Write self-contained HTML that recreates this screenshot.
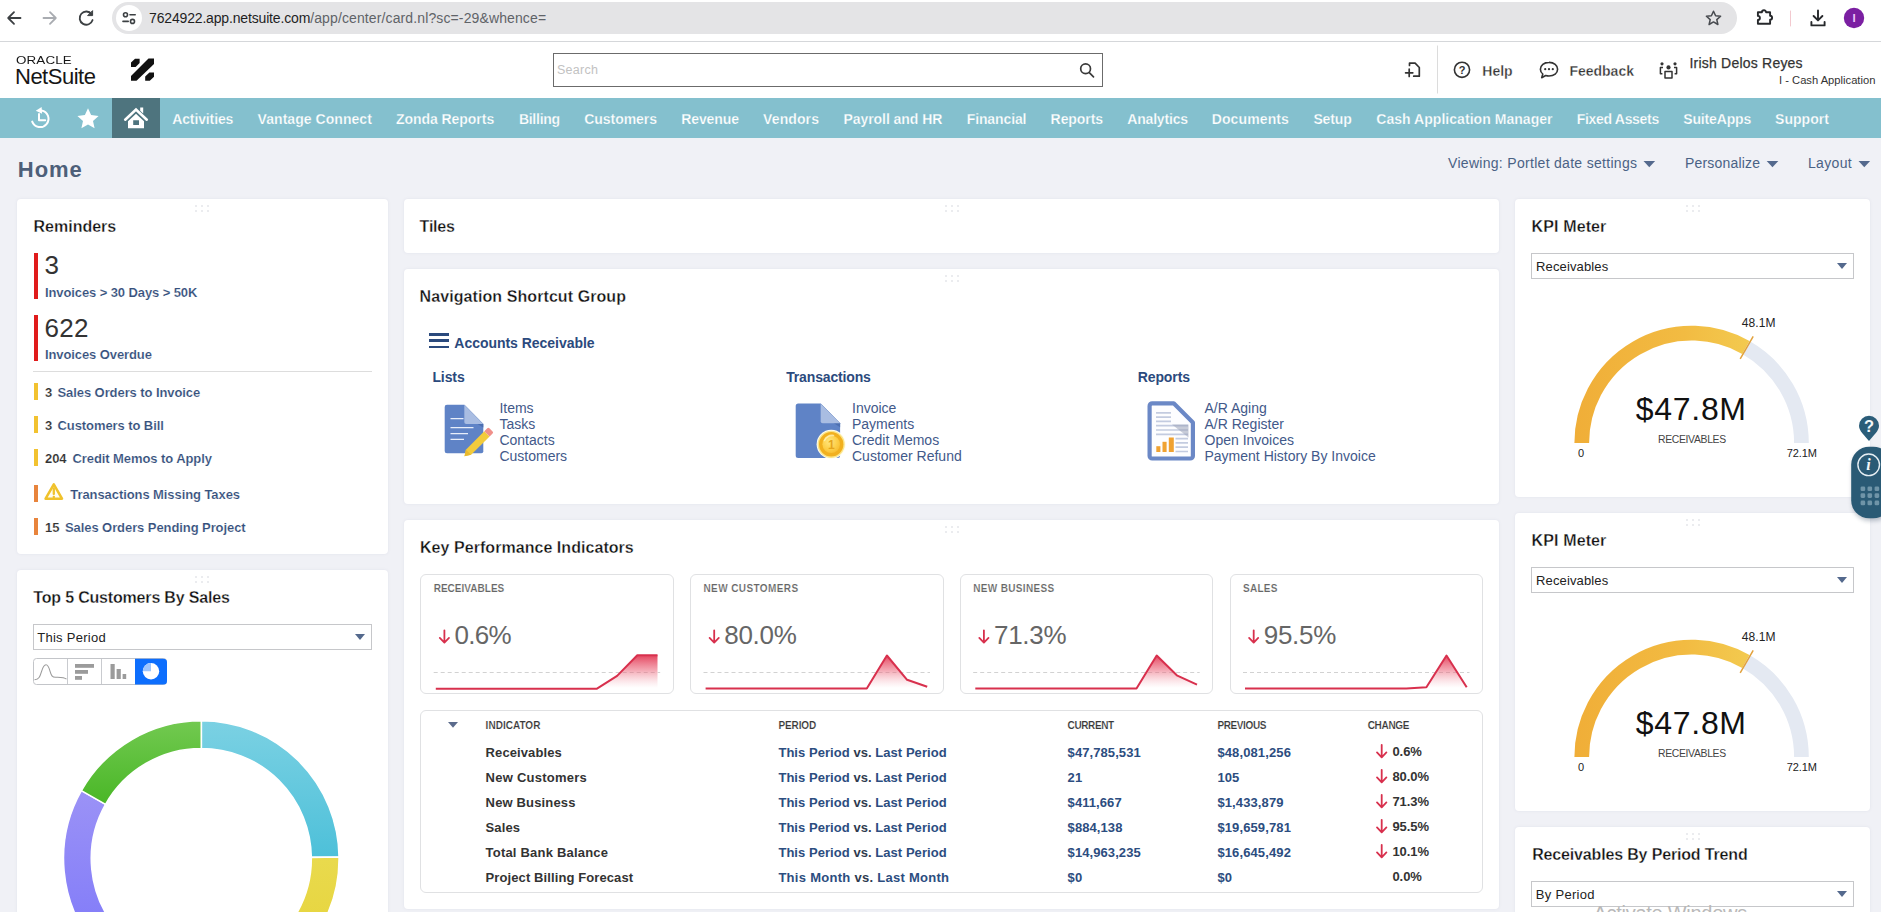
<!DOCTYPE html>
<html lang="en">
<head>
<meta charset="utf-8">
<title>Home - NetSuite</title>
<style>
*{box-sizing:border-box;margin:0;padding:0}
html,body{width:1881px;height:912px;overflow:hidden;background:#f0f1f6}
body{position:relative;font-family:"Liberation Sans","DejaVu Sans",sans-serif;color:#222;-webkit-font-smoothing:antialiased}
.abs{position:absolute}
.t{position:absolute;white-space:nowrap;line-height:1}
svg{position:absolute;overflow:visible}
/* browser chrome */
#chrome{position:absolute;left:0;top:0;width:1881px;height:42px;background:#fff;border-bottom:1px solid #d5d7da}
#pill{position:absolute;left:112px;top:2px;width:1625px;height:32px;border-radius:16px;background:#e4e4e6}
#pillic{position:absolute;left:116px;top:5px;width:26px;height:26px;border-radius:13px;background:#fff}
/* header */
#hdr{position:absolute;left:0;top:42px;width:1881px;height:56px;background:#fff}
#search{position:absolute;left:553px;top:53px;width:550px;height:34px;border:1px solid #6b6b6b;border-radius:0;background:transparent}
/* nav */
#nav{position:absolute;left:0;top:98px;width:1881px;height:40px;background:#84c0ce}
#navhome{position:absolute;left:112px;top:98px;width:48px;height:40px;background:#4e747e}
.nv{position:absolute;top:110px;color:#fff;font-weight:bold;-webkit-text-stroke:0.25px #84c0ce;font-size:14px;white-space:nowrap;line-height:18px}
/* portlets */
.p{position:absolute;background:#fff;border-radius:4px;box-shadow:0 0 3px rgba(120,130,160,.13)}
.pt{position:absolute;white-space:nowrap;font-weight:bold;font-size:16.5px;color:#111;line-height:20px}
.dots{position:absolute;width:14px;height:7px}
.dots i{position:absolute;width:2px;height:2px;background:#ebecef}
.sel{position:absolute;height:25px;border:1px solid #c6c7ca;background:#fff;font-size:13.5px;color:#222;line-height:23px;padding-left:4px;white-space:nowrap}
.sel:after{content:"";position:absolute;right:6.500px;top:9px;border-left:5.800px solid transparent;border-right:5.800px solid transparent;border-top:6.400px solid #54698d}
.lnk{color:#35507c}
</style>
</head>
<body>
<!-- ================= BROWSER CHROME ================= -->
<div id="chrome"></div>
<div id="pill"></div>
<div id="pillic"></div>
<svg style="left:0;top:0" width="1881" height="42" viewBox="0 0 1881 42" fill="none" stroke-linecap="round" stroke-linejoin="round">
<!-- back -->
<path d="M20.5 18H8.5M14 12.2L8.2 18l5.8 5.8" stroke="#3c4043" stroke-width="1.8"/>
<!-- forward -->
<path d="M43.5 18h12M50 12.2l5.8 5.8-5.8 5.8" stroke="#a9acb1" stroke-width="1.8"/>
<!-- reload -->
<path d="M91.6 14.2A6.6 6.6 0 1 0 92.6 20" stroke="#3c4043" stroke-width="1.8"/>
<path d="M92.6 11v4.6H88z" fill="#3c4043" stroke="#3c4043" stroke-width="1"/>
<!-- tune icon -->
<g stroke="#3c4043" stroke-width="1.6"><circle cx="125.5" cy="14.8" r="2"/><path d="M130 14.8h5.2"/><circle cx="132.5" cy="21.4" r="2"/><path d="M123 21.4h5.2"/></g>
<!-- star -->
<path d="M1713.5 11.2l2.1 4.6 5 .5-3.8 3.3 1.1 4.9-4.4-2.6-4.4 2.6 1.1-4.9-3.8-3.3 5-.5z" stroke="#474a4f" stroke-width="1.5"/>
<!-- extension puzzle -->
<path d="M1757.900 12.300h4a2.100 2.100 0 0 1 4.200 0h4v3.400a2 2 0 0 1 0 4v4h-12.200v-3.800a2 2 0 0 0 0-4z" stroke="#26282b" stroke-width="1.900"/>
<!-- divider -->
<path d="M1790.5 11v15" stroke="#f3c9cf" stroke-width="1"/>
<!-- download -->
<path d="M1818 10.5v9.6M1813.6 16l4.4 4.4 4.4-4.4M1811.4 22v3.4h13.2V22" stroke="#26282b" stroke-width="1.9"/>
<circle cx="1854" cy="18" r="10.2" fill="#7b1fa2" stroke="none"/>
</svg>
<div class="t" style="left:1850.5px;top:12px;width:7px;text-align:center;font-size:11.5px;font-weight:bold;color:#efc6fa;line-height:13px">I</div>
<div class="t" style="left:149px;top:10px;font-size:14px;color:#1f1f1f;line-height:17px"><span style="letter-spacing:-0.16px">7624922.app.netsuite.com</span><span style="color:#5f6368;letter-spacing:0.12px">/app/center/card.nl?sc=-29&amp;whence=</span></div>

<!-- ================= HEADER ================= -->
<div id="hdr"></div>
<div class="t" style="left:16px;top:56px;font-size:10.4px;line-height:10px;color:#161616;transform-origin:0 0;transform:scaleX(1.29);letter-spacing:0.1px">ORACLE</div>
<div class="t" style="left:15px;top:66px;font-size:22px;line-height:22px;color:#161616;letter-spacing:-0.5px">NetSuite</div>
<svg style="left:0;top:42px" width="1881" height="56" viewBox="0 42 1881 56">
<polygon points="131,76 148.5,58.4 154,58.4 154,64 136.5,80.8 131,80.8" fill="#111"/>
<polygon points="131,62.6 135,58.8 139.6,58.8 139.6,63 135.6,67 131,67" fill="#111"/>
<polygon points="145.2,76.4 149.4,72.4 154,72.4 154,76.8 149.8,80.8 145.2,80.8" fill="#111"/>
<!-- magnifier -->
<g fill="none" stroke="#3a3a3a" stroke-width="1.7" stroke-linecap="round"><circle cx="1085.6" cy="68.8" r="4.9"/><path d="M1089.3 72.6l4.2 4.2"/></g>
<!-- new doc icon -->
<g fill="none" stroke="#333" stroke-width="1.7" stroke-linejoin="round" stroke-linecap="round"><path d="M1409.5 65.5v-2.3h5.6l4.2 4.3v8.7h-5.6"/><path d="M1405.6 72.8h7.2M1409.2 69.2v7.2"/></g>
<path d="M1437.5 45.5v48" stroke="#dcdcdc" stroke-width="1"/>
<!-- help -->
<circle cx="1462" cy="69.8" r="7.6" fill="none" stroke="#333" stroke-width="1.6"/>
<!-- feedback bubble -->
<path d="M1549 62.4c5 0 8.6 3 8.6 6.8s-3.6 6.8-8.6 6.800c-1.200 0-2.300-.2-3.300-.5l-4 2.200 1.100-3.700c-1.500-1.200-2.400-2.900-2.400-4.800 0-3.800 3.600-6.800 8.600-6.800z" fill="none" stroke="#333" stroke-width="1.6" stroke-linejoin="round"/>
<g fill="#333"><circle cx="1545.2" cy="69.200" r="1.100"/><circle cx="1549" cy="69.200" r="1.100"/><circle cx="1552.8" cy="69.200" r="1.100"/></g>
<!-- roles icon -->
<g fill="none" stroke="#333" stroke-width="1.5" stroke-linejoin="round"><rect x="1665" y="71.6" width="7" height="6.400"/><path d="M1663 67.600h-2.600v6.200h2M1674 67.600h2.600v6.200h-2"/></g>
<g fill="#333"><circle cx="1668.500" cy="67.400" r="2.100"/><circle cx="1662" cy="63.800" r="1.600"/><circle cx="1675" cy="63.800" r="1.600"/></g>
</svg>
<div id="search"></div>
<div class="t" style="left:557px;top:63px;font-size:12.5px;line-height:15px;color:#c2c2c2;letter-spacing:0.25px">Search</div>
<div class="t" style="left:1458.2px;top:63.5px;font-size:11px;font-weight:bold;line-height:13px;color:#333;width:8px;text-align:center">?</div>
<div class="t" style="left:1482.3px;top:63px;font-size:14px;font-weight:bold;-webkit-text-stroke:0.3px #fff;line-height:17px;color:#333">Help</div>
<div class="t" style="left:1569.4px;top:63px;font-size:14px;font-weight:bold;-webkit-text-stroke:0.3px #fff;line-height:17px;color:#333">Feedback</div>
<div class="t" style="left:1689.4px;top:55px;font-size:14px;line-height:17px;color:#333;letter-spacing:0.22px;-webkit-text-stroke:0.25px #333">Irish Delos Reyes</div>
<div class="t" style="left:1779px;top:73.5px;font-size:11.2px;line-height:13px;color:#333">I - Cash Application</div>

<!-- ================= NAV ================= -->
<div id="nav"></div>
<div id="navhome"></div>
<div class="nv" style="left:172.2px;letter-spacing:-0.12px">Activities</div>
<div class="nv" style="left:257.6px;letter-spacing:0.05px">Vantage Connect</div>
<div class="nv" style="left:395.9px;letter-spacing:-0.04px">Zonda Reports</div>
<div class="nv" style="left:518.9px;letter-spacing:-0.26px">Billing</div>
<div class="nv" style="left:584.2px;letter-spacing:-0.04px">Customers</div>
<div class="nv" style="left:681.2px;letter-spacing:-0.10px">Revenue</div>
<div class="nv" style="left:763.1px;letter-spacing:0.10px">Vendors</div>
<div class="nv" style="left:843.5px;letter-spacing:-0.06px">Payroll and HR</div>
<div class="nv" style="left:966.7px;letter-spacing:-0.11px">Financial</div>
<div class="nv" style="left:1050.6px;letter-spacing:-0.07px">Reports</div>
<div class="nv" style="left:1127.2px;letter-spacing:-0.17px">Analytics</div>
<div class="nv" style="left:1211.7px;letter-spacing:0.12px">Documents</div>
<div class="nv" style="left:1313.4px;letter-spacing:-0.12px">Setup</div>
<div class="nv" style="left:1376.3px;letter-spacing:0.04px">Cash Application Manager</div>
<div class="nv" style="left:1576.7px;letter-spacing:-0.30px">Fixed Assets</div>
<div class="nv" style="left:1683.2px;letter-spacing:-0.14px">SuiteApps</div>
<div class="nv" style="left:1775.0px;letter-spacing:0.04px">Support</div>
<svg style="left:0;top:98px" width="200" height="40" viewBox="0 98 200 40">
<!-- recent -->
<g fill="none" stroke="#fff" stroke-width="2" stroke-linecap="round" stroke-linejoin="round"><path d="M41.500 110.400A8.400 8.400 0 1 1 32.200 121.600"/><path d="M39 114v6.300h6.200"/></g>
<path d="M41.600 106.900l.5 6.800-6.300-2.900z" fill="#fff"/>
<!-- star -->
<path d="M88 108.200l3.100 6.900 7.500 .8-5.600 5 1.600 7.400-6.600-3.800-6.600 3.800 1.600-7.400-5.600-5 7.500-.8z" fill="#fff"/>
<!-- home -->
<path d="M125.200 119.700L136 109.500l10.800 10.200" fill="none" stroke="#fff" stroke-width="2.600" stroke-linecap="round" stroke-linejoin="miter"/>
<path d="M140.200 107.600h3v6l-3-2.900z" fill="#fff"/>
<path d="M128 121.300l8-7.600 8 7.600v7h-16z M133.200 120.200v4.700h5.800v-4.700z" fill="#fff" fill-rule="evenodd"/>
</svg>

<!-- ================= TITLE ROW ================= -->
<div class="t" style="left:17.8px;top:158px;font-size:22px;font-weight:bold;line-height:24px;color:#4d5f79;letter-spacing:0.95px">Home</div>
<div class="t lnk" style="left:1448px;top:155px;font-size:14px;line-height:17px;letter-spacing:0.3px;color:#4a6285">Viewing: Portlet date settings</div>
<div class="t lnk" style="left:1685px;top:155px;font-size:14px;line-height:17px;letter-spacing:0.18px;color:#4a6285">Personalize</div>
<div class="t lnk" style="left:1808px;top:155px;font-size:14px;line-height:17px;letter-spacing:0.32px;color:#4a6285">Layout</div>
<svg style="left:1600px;top:150px" width="281" height="30" viewBox="1600 150 281 30" fill="#54698d">
<path d="M1643.500 161h11.600l-5.800 6.200z"/><path d="M1766.700 161h11.600l-5.800 6.200z"/><path d="M1858.500 161h11.600l-5.800 6.200z"/>
</svg>

<!-- ================= PORTLETS ================= -->
<div class="p" style="left:17px;top:199px;width:371px;height:355px"></div>
<div class="p" style="left:17px;top:570px;width:371px;height:360px"></div>
<div class="p" style="left:404px;top:199px;width:1095px;height:54px"></div>
<div class="p" style="left:404px;top:269px;width:1095px;height:235px"></div>
<div class="p" style="left:404px;top:520px;width:1095px;height:389px"></div>
<div class="p" style="left:1515px;top:199px;width:355px;height:298px"></div>
<div class="p" style="left:1515px;top:513px;width:355px;height:298px"></div>
<div class="p" style="left:1515px;top:827px;width:355px;height:120px"></div>
<!-- reminders -->
<div class="dots" style="left:195px;top:205px"><i style="left:0px;top:0px"></i><i style="left:6px;top:0px"></i><i style="left:12px;top:0px"></i><i style="left:0px;top:5px"></i><i style="left:6px;top:5px"></i><i style="left:12px;top:5px"></i></div>
<div class="t" style="left:33.5px;top:219px;font-size:16px;color:#111;font-weight:bold;-webkit-text-stroke:0.3px #fff">Reminders</div>
<div class="abs" style="left:34px;top:253px;width:4px;height:46px;background:#e01b1b"></div>
<div class="t" style="left:44.5px;top:252px;font-size:26px;color:#333;letter-spacing:0.3px">3</div>
<div class="t" style="left:45px;top:286px;font-size:13px;color:#35507c;font-weight:bold;-webkit-text-stroke:0.15px #fff;letter-spacing:-0.1px">Invoices &gt; 30 Days &gt; 50K</div>
<div class="abs" style="left:34px;top:315px;width:4px;height:46px;background:#e01b1b"></div>
<div class="t" style="left:44.5px;top:315px;font-size:26px;color:#333;letter-spacing:0.3px">622</div>
<div class="t" style="left:45px;top:348px;font-size:13px;color:#35507c;font-weight:bold;-webkit-text-stroke:0.15px #fff;letter-spacing:-0.1px">Invoices Overdue</div>
<div class="abs" style="left:33px;top:371px;width:339px;height:1px;background:#dddddd"></div>
<div class="abs" style="left:34px;top:383px;width:4px;height:17px;background:#f2c230"></div>
<div class="t" style="left:45px;top:386px;font-size:13px;color:#333;font-weight:bold;-webkit-text-stroke:0.15px #fff;letter-spacing:-0.1px">3</div>
<div class="t" style="left:57.5px;top:386px;font-size:13px;color:#35507c;font-weight:bold;-webkit-text-stroke:0.15px #fff;letter-spacing:-0.08px">Sales Orders to Invoice</div>
<div class="abs" style="left:34px;top:416px;width:4px;height:17px;background:#f2c230"></div>
<div class="t" style="left:45px;top:419px;font-size:13px;color:#333;font-weight:bold;-webkit-text-stroke:0.15px #fff;letter-spacing:-0.1px">3</div>
<div class="t" style="left:57.5px;top:419px;font-size:13px;color:#35507c;font-weight:bold;-webkit-text-stroke:0.15px #fff;letter-spacing:-0.08px">Customers to Bill</div>
<div class="abs" style="left:34px;top:449px;width:4px;height:17px;background:#f2c230"></div>
<div class="t" style="left:45px;top:452px;font-size:13px;color:#333;font-weight:bold;-webkit-text-stroke:0.15px #fff;letter-spacing:-0.1px">204</div>
<div class="t" style="left:72.5px;top:452px;font-size:13px;color:#35507c;font-weight:bold;-webkit-text-stroke:0.15px #fff;letter-spacing:-0.08px">Credit Memos to Apply</div>
<div class="abs" style="left:34px;top:485px;width:4px;height:17px;background:#e8843c"></div>
<div class="t" style="left:70.3px;top:488px;font-size:13px;color:#35507c;font-weight:bold;-webkit-text-stroke:0.15px #fff;letter-spacing:-0.08px">Transactions Missing Taxes</div>
<div class="abs" style="left:34px;top:518px;width:4px;height:17px;background:#e8843c"></div>
<div class="t" style="left:45px;top:521px;font-size:13px;color:#333;font-weight:bold;-webkit-text-stroke:0.15px #fff;letter-spacing:-0.1px">15</div>
<div class="t" style="left:65px;top:521px;font-size:13px;color:#35507c;font-weight:bold;-webkit-text-stroke:0.15px #fff;letter-spacing:-0.08px">Sales Orders Pending Project</div>
<svg style="left:40px;top:478px" width="28" height="27" viewBox="40 478 28 27"><path d="M53.800 484.300L62 498.700H45.600Z" fill="#fffdf2" stroke="#f0c22c" stroke-width="2.500" stroke-linejoin="round"/><path d="M53.800 488.400v5.700" stroke="#f0c22c" stroke-width="2.300" stroke-linecap="round"/><circle cx="53.800" cy="496.900" r="1.250" fill="#f0c22c"/></svg>
<!-- top5 -->
<div class="dots" style="left:195px;top:576px"><i style="left:0px;top:0px"></i><i style="left:6px;top:0px"></i><i style="left:12px;top:0px"></i><i style="left:0px;top:5px"></i><i style="left:6px;top:5px"></i><i style="left:12px;top:5px"></i></div>
<div class="t" style="left:33.3px;top:590px;font-size:16px;color:#111;font-weight:bold;-webkit-text-stroke:0.3px #fff;letter-spacing:-0.18px">Top 5 Customers By Sales</div>
<div class="sel" style="left:33px;top:624px;width:339px;height:26px">&nbsp;</div>
<div class="t" style="left:37.2px;top:631px;font-size:13px;color:#222;letter-spacing:0.27px">This Period</div>
<svg style="left:30px;top:655px" width="142" height="34" viewBox="30 655 142 34">
<rect x="33.500" y="658.500" width="133" height="26" rx="3" fill="#fff" stroke="#c3c5c9"/>
<path d="M67.500 659v25M101.500 659v25" stroke="#c9cbcf"/>
<path d="M135 658.800h28.500a3.500 3.500 0 0 1 3.500 3.500v18.700a3.500 3.500 0 0 1-3.500 3.500H135z" fill="#0d6efd"/>
<path d="M34.500 679.800c4.500-.3 5.400-3 7-8.200 1.300-4.200 2.400-6.800 4.500-6.800s3 2.800 4 6.400c1.200 4.300 2.200 6 5.500 6.100 3.600.1 8.400-.4 11 1.900" fill="none" stroke="#9b9b9b" stroke-width="1.100"/>
<g fill="#9b9b9b"><rect x="75" y="664" width="19" height="3.800"/><rect x="75" y="670" width="13" height="3.800"/><rect x="75" y="676" width="7" height="3.800"/>
<rect x="110.500" y="664" width="4.200" height="15"/><rect x="116.600" y="669" width="4.200" height="10"/><rect x="122.600" y="674" width="3.600" height="5"/></g>
<circle cx="151" cy="671.300" r="8.200" fill="#fff"/>
<path d="M151 671.300V663.100A8.200 8.200 0 0 0 142.800 671.300z" fill="#9ec5fe"/>
</svg>
<svg style="left:40px;top:700px" width="340" height="212" viewBox="40 700 340 212">
<defs>
<linearGradient id="gC" gradientUnits="userSpaceOnUse" x1="0" y1="721" x2="0" y2="858"><stop offset="0" stop-color="#7bd1e3"/><stop offset="1" stop-color="#4dc0d9"/></linearGradient>
<linearGradient id="gG" gradientUnits="userSpaceOnUse" x1="0" y1="721" x2="0" y2="803"><stop offset="0" stop-color="#72c950"/><stop offset="1" stop-color="#4ab727"/></linearGradient>
<linearGradient id="gP" gradientUnits="userSpaceOnUse" x1="0" y1="791" x2="0" y2="990"><stop offset="0" stop-color="#9b92f6"/><stop offset="1" stop-color="#7873fa"/></linearGradient>
<linearGradient id="gY" gradientUnits="userSpaceOnUse" x1="0" y1="857" x2="0" y2="960"><stop offset="0" stop-color="#e9da4d"/><stop offset="1" stop-color="#e6d33a"/></linearGradient>
</defs>
<path d="M201.30 720.70A137.8 137.8 0 0 1 339.09 857.06L311.29 857.35A110 110 0 0 0 201.30 748.50Z" fill="url(#gC)" stroke="#fff" stroke-width="1.600" stroke-linejoin="round"/>
<path d="M339.09 857.06A137.8 137.8 0 0 1 248.43 987.99L238.92 961.87A110 110 0 0 0 311.29 857.35Z" fill="url(#gY)" stroke="#fff" stroke-width="1.600" stroke-linejoin="round"/>
<path d="M248.43 987.99A137.8 137.8 0 0 1 81.36 790.64L105.56 804.33A110 110 0 0 0 238.92 961.87Z" fill="url(#gP)" stroke="#fff" stroke-width="1.600" stroke-linejoin="round"/>
<path d="M81.36 790.64A137.8 137.8 0 0 1 201.30 720.70L201.30 748.50A110 110 0 0 0 105.56 804.33Z" fill="url(#gG)" stroke="#fff" stroke-width="1.600" stroke-linejoin="round"/>
</svg>
<!-- tiles -->
<div class="dots" style="left:944.5px;top:205px"><i style="left:0px;top:0px"></i><i style="left:6px;top:0px"></i><i style="left:12px;top:0px"></i><i style="left:0px;top:5px"></i><i style="left:6px;top:5px"></i><i style="left:12px;top:5px"></i></div>
<div class="t" style="left:419.6px;top:219px;font-size:16px;color:#111;font-weight:bold;-webkit-text-stroke:0.3px #fff;letter-spacing:-0.2px">Tiles</div>
<!-- navshort -->
<div class="dots" style="left:944.5px;top:275px"><i style="left:0px;top:0px"></i><i style="left:6px;top:0px"></i><i style="left:12px;top:0px"></i><i style="left:0px;top:5px"></i><i style="left:6px;top:5px"></i><i style="left:12px;top:5px"></i></div>
<div class="t" style="left:419.6px;top:289px;font-size:16px;color:#111;font-weight:bold;-webkit-text-stroke:0.3px #fff;letter-spacing:0.08px">Navigation Shortcut Group</div>
<div class="abs" style="left:429px;top:333.200px;width:20px;height:2.700px;background:#2b4a7d"></div><div class="abs" style="left:429px;top:339.300px;width:20px;height:2.700px;background:#2b4a7d"></div><div class="abs" style="left:429px;top:345.500px;width:20px;height:2.700px;background:#2b4a7d"></div>
<div class="t" style="left:454.3px;top:336px;font-size:14px;color:#2b4a7d;font-weight:bold;letter-spacing:-0.03px">Accounts Receivable</div>
<div class="t" style="left:432.4px;top:370px;font-size:14px;color:#2b4a7d;font-weight:bold;letter-spacing:-0.1px">Lists</div>
<div class="t" style="left:786.2px;top:370px;font-size:14px;color:#2b4a7d;font-weight:bold;letter-spacing:-0.15px">Transactions</div>
<div class="t" style="left:1137.7px;top:370px;font-size:14px;color:#2b4a7d;font-weight:bold;letter-spacing:-0.1px">Reports</div>
<div class="t" style="left:499.4px;top:401px;font-size:14px;color:#42598a">Items</div>
<div class="t" style="left:499.4px;top:417px;font-size:14px;color:#42598a">Tasks</div>
<div class="t" style="left:499.4px;top:433px;font-size:14px;color:#42598a">Contacts</div>
<div class="t" style="left:499.4px;top:449px;font-size:14px;color:#42598a">Customers</div>
<div class="t" style="left:852px;top:401px;font-size:14px;color:#42598a">Invoice</div>
<div class="t" style="left:852px;top:417px;font-size:14px;color:#42598a">Payments</div>
<div class="t" style="left:852px;top:433px;font-size:14px;color:#42598a">Credit Memos</div>
<div class="t" style="left:852px;top:449px;font-size:14px;color:#42598a">Customer Refund</div>
<div class="t" style="left:1204.5px;top:401px;font-size:14px;color:#42598a">A/R Aging</div>
<div class="t" style="left:1204.5px;top:417px;font-size:14px;color:#42598a">A/R Register</div>
<div class="t" style="left:1204.5px;top:433px;font-size:14px;color:#42598a">Open Invoices</div>
<div class="t" style="left:1204.5px;top:449px;font-size:14px;color:#42598a">Payment History By Invoice</div>
<svg style="left:440px;top:400px" width="58" height="62" viewBox="440 400 58 62">
<path d="M447 404.700h17.300l19 19.300v27.300a2 2 0 0 1-2 2h-34.300a2.300 2.300 0 0 1-2.300-2.300v-44a2.300 2.300 0 0 1 2.300-2.300z" fill="#5f83c6"/>
<path d="M464.300 404.700l19 19.300v3.500l-10-6z" fill="#4c6fb1"/>
<path d="M464.300 404.700l19 19.300h-17a2 2 0 0 1-2-2z" fill="#a9bde2"/>
<g stroke="#e8eefa" stroke-width="1.300"><path d="M450.500 418.600h13M450.500 427.600h23M450.500 433.600h17.500M450.500 439.400h13.500"/></g>
<path d="M464.500 456.300l1.400-6.600 18.400-18.400 5.300 5.200-18.500 18.300z" fill="#f3cb3c"/>
<path d="M464.500 456.300l1.400-6.600 5.200 5.100z" fill="#e9b92e"/>
<path d="M484.300 431.300l3-3a1.500 1.500 0 0 1 2.100 0l3.200 3.100a1.500 1.500 0 0 1 0 2.100l-3 3z" fill="#f0908a"/>
</svg>
<svg style="left:790px;top:398px" width="60" height="66" viewBox="790 398 60 66">
<defs><radialGradient id="coin" cx="0.4" cy="0.35" r="0.7"><stop offset="0" stop-color="#ffe680"/><stop offset="0.600" stop-color="#fdd04a"/><stop offset="1" stop-color="#f7bd30"/></radialGradient></defs>
<path d="M798.200 403.400h22.500l19.400 19.800v32.600a2.300 2.300 0 0 1-2.300 2.300h-39.600a2.500 2.500 0 0 1-2.500-2.500v-49.700a2.500 2.500 0 0 1 2.500-2.500z" fill="#5f83c6"/>
<path d="M820.700 403.400l19.400 19.800v4l-10-6.500z" fill="#4c6fb1"/>
<path d="M820.700 403.400l19.400 19.800h-17.400a2 2 0 0 1-2-2z" fill="#a9bde2"/>
<circle cx="831.200" cy="444.300" r="14.600" fill="#fffdf0"/>
<circle cx="831.200" cy="444.300" r="13.600" fill="#fbe58a"/>
<circle cx="831.200" cy="444.300" r="12.200" fill="#f1b01f"/>
<circle cx="831.200" cy="444.300" r="8.800" fill="url(#coin)"/>
<path d="M824.500 440.500a8.800 8.800 0 0 1 9-5" fill="none" stroke="#fff3b8" stroke-width="1.600" stroke-linecap="round" opacity="0.800"/>
<text x="831.300" y="448.700" text-anchor="middle" font-family="Liberation Sans, sans-serif" font-size="12" font-weight="bold" fill="#e6a51c">1</text>
</svg>
<svg style="left:1144px;top:398px" width="56" height="66" viewBox="1144 398 56 66">
<path d="M1152.200 403.300h21.500l19.200 19.300v33.300a2.600 2.600 0 0 1-2.600 2.600h-38.100a2.600 2.600 0 0 1-2.600-2.600v-50a2.600 2.600 0 0 1 2.600-2.600z" fill="#fdfdff" stroke="#6b88c6" stroke-width="4.200" stroke-linejoin="round"/>
<g stroke="#c3cbe0" stroke-width="1.700"><path d="M1156 412.800h15M1156 417.100h15M1156 421.400h15M1156 425.700h32M1156 430h32M1156 434.300h32M1175.500 438.600h12.500M1175.500 442.900h12.500M1175.500 447.200h12.500M1175.500 451.500h12.500"/></g>
<path d="M1172 424.500h16.500v13z" fill="#9aa3b8" opacity="0.550"/>
<g fill="#f0a232"><rect x="1156.300" y="446.200" width="4.100" height="5.800"/><rect x="1162.500" y="441.800" width="4.100" height="10.200"/><rect x="1168.800" y="437.500" width="5" height="14.500"/></g>
</svg>
<!-- kpi -->
<div class="dots" style="left:944.5px;top:526px"><i style="left:0px;top:0px"></i><i style="left:6px;top:0px"></i><i style="left:12px;top:0px"></i><i style="left:0px;top:5px"></i><i style="left:6px;top:5px"></i><i style="left:12px;top:5px"></i></div>
<div class="t" style="left:420px;top:540px;font-size:16px;color:#111;font-weight:bold;-webkit-text-stroke:0.3px #fff;letter-spacing:0.05px">Key Performance Indicators</div>
<div class="abs" style="left:420.2px;top:574px;width:253.700px;height:120px;border:1px solid #e0e1e3;border-radius:6px;background:#fff"></div>
<div class="t" style="left:433.7px;top:584px;font-size:10px;color:#666;font-weight:bold;-webkit-text-stroke:0.15px #fff;letter-spacing:0.02px">RECEIVABLES</div>
<div class="t" style="left:454.5px;top:622px;font-size:26px;color:#666;letter-spacing:-0.7px">0.6%</div>
<div class="abs" style="left:690.0px;top:574px;width:253.700px;height:120px;border:1px solid #e0e1e3;border-radius:6px;background:#fff"></div>
<div class="t" style="left:703.45px;top:584px;font-size:10px;color:#666;font-weight:bold;-webkit-text-stroke:0.15px #fff;letter-spacing:0.4px">NEW CUSTOMERS</div>
<div class="t" style="left:724.25px;top:622px;font-size:26px;color:#666;letter-spacing:-0.3px">80.0%</div>
<div class="abs" style="left:959.7px;top:574px;width:253.700px;height:120px;border:1px solid #e0e1e3;border-radius:6px;background:#fff"></div>
<div class="t" style="left:973.2px;top:584px;font-size:10px;color:#666;font-weight:bold;-webkit-text-stroke:0.15px #fff;letter-spacing:0.35px">NEW BUSINESS</div>
<div class="t" style="left:994px;top:622px;font-size:26px;color:#666;letter-spacing:-0.3px">71.3%</div>
<div class="abs" style="left:1229.5px;top:574px;width:253.700px;height:120px;border:1px solid #e0e1e3;border-radius:6px;background:#fff"></div>
<div class="t" style="left:1242.95px;top:584px;font-size:10px;color:#666;font-weight:bold;-webkit-text-stroke:0.15px #fff;letter-spacing:0.3px">SALES</div>
<div class="t" style="left:1263.75px;top:622px;font-size:26px;color:#666;letter-spacing:-0.3px">95.5%</div>
<div class="abs" style="left:420px;top:710px;width:1062.500px;height:182.500px;border:1px solid #e0e1e3;border-radius:6px;background:#fff"></div>
<svg style="left:404px;top:560px" width="1095" height="140" viewBox="404 560 1095 140">
<defs><linearGradient id="spk" gradientUnits="userSpaceOnUse" x1="0" y1="655" x2="0" y2="688"><stop offset="0" stop-color="#e23a55" stop-opacity="0.950"/><stop offset="0.450" stop-color="#ea5d73" stop-opacity="0.550"/><stop offset="1" stop-color="#f3a0ad" stop-opacity="0"/></linearGradient></defs>
<path d="M444.4 630.300V642.400M439.8 637.900L444.4 642.600L449.0 637.900" fill="none" stroke="#d8304d" stroke-width="1.800" stroke-linecap="round" stroke-linejoin="round"/>
<path d="M433.7 672.500H660.2" stroke="#d2d2d2" stroke-width="1" stroke-dasharray="4 3"/>
<path d="M435.8 688.7L455.9 688.7L476.1 688.7L496.2 688.7L516.4 688.7L536.5 688.7L556.7 688.7L576.9 688.7L597.0 688.7L617.1 675.9L637.3 655.2L657.5 655.2L657.5 689L435.8 689Z" fill="url(#spk)"/>
<path d="M435.8 688.7L455.9 688.7L476.1 688.7L496.2 688.7L516.4 688.7L536.5 688.7L556.7 688.7L576.9 688.7L597.0 688.7L617.1 675.9L637.3 655.2L657.5 655.2" fill="none" stroke="#d8304d" stroke-width="2" stroke-linejoin="round" stroke-linecap="butt"/>
<path d="M714.2 630.300V642.400M709.6 637.900L714.2 642.600L718.8 637.900" fill="none" stroke="#d8304d" stroke-width="1.800" stroke-linecap="round" stroke-linejoin="round"/>
<path d="M703.5 672.500H930.0" stroke="#d2d2d2" stroke-width="1" stroke-dasharray="4 3"/>
<path d="M705.6 688.6L725.7 688.6L745.9 688.6L766.0 688.6L786.2 688.6L806.3 688.6L826.5 688.6L846.6 688.6L866.8 688.6L886.9 655.5L907.1 679.8L927.2 686.8L927.2 689L705.6 689Z" fill="url(#spk)"/>
<path d="M705.6 688.6L725.7 688.6L745.9 688.6L766.0 688.6L786.2 688.6L806.3 688.6L826.5 688.6L846.6 688.6L866.8 688.6L886.9 655.5L907.1 679.8L927.2 686.8" fill="none" stroke="#d8304d" stroke-width="2" stroke-linejoin="round" stroke-linecap="butt"/>
<path d="M983.9 630.300V642.400M979.3 637.900L983.9 642.600L988.5 637.900" fill="none" stroke="#d8304d" stroke-width="1.800" stroke-linecap="round" stroke-linejoin="round"/>
<path d="M973.2 672.500H1199.7" stroke="#d2d2d2" stroke-width="1" stroke-dasharray="4 3"/>
<path d="M975.3 688.6L995.5 688.6L1015.6 688.6L1035.8 688.6L1055.9 688.6L1076.1 688.6L1096.2 688.6L1116.4 688.6L1136.5 688.6L1156.7 655.5L1176.8 675.3L1197.0 684.6L1197.0 689L975.3 689Z" fill="url(#spk)"/>
<path d="M975.3 688.6L995.5 688.6L1015.6 688.6L1035.8 688.6L1055.9 688.6L1076.1 688.6L1096.2 688.6L1116.4 688.6L1136.5 688.6L1156.7 655.5L1176.8 675.3L1197.0 684.6" fill="none" stroke="#d8304d" stroke-width="2" stroke-linejoin="round" stroke-linecap="butt"/>
<path d="M1253.7 630.300V642.400M1249.1 637.900L1253.7 642.600L1258.2 637.900" fill="none" stroke="#d8304d" stroke-width="1.800" stroke-linecap="round" stroke-linejoin="round"/>
<path d="M1243.0 672.500H1469.5" stroke="#d2d2d2" stroke-width="1" stroke-dasharray="4 3"/>
<path d="M1245.0 688.6L1265.2 688.6L1285.3 688.6L1305.5 688.6L1325.6 688.6L1345.8 688.6L1366.0 688.6L1386.1 688.6L1406.2 688.4L1426.4 687.2L1446.5 655.5L1466.7 687.2L1466.7 689L1245.0 689Z" fill="url(#spk)"/>
<path d="M1245.0 688.6L1265.2 688.6L1285.3 688.6L1305.5 688.6L1325.6 688.6L1345.8 688.6L1366.0 688.6L1386.1 688.6L1406.2 688.4L1426.4 687.2L1446.5 655.5L1466.7 687.2" fill="none" stroke="#d8304d" stroke-width="2" stroke-linejoin="round" stroke-linecap="butt"/>
</svg>
<div class="t" style="left:485.6px;top:721px;font-size:10px;color:#383838;font-weight:bold;-webkit-text-stroke:0.15px #fff;letter-spacing:0.02px">INDICATOR</div>
<div class="t" style="left:778.4px;top:721px;font-size:10px;color:#383838;font-weight:bold;-webkit-text-stroke:0.15px #fff;letter-spacing:-0.1px">PERIOD</div>
<div class="t" style="left:1067.6px;top:721px;font-size:10px;color:#383838;font-weight:bold;-webkit-text-stroke:0.15px #fff;letter-spacing:-0.4px">CURRENT</div>
<div class="t" style="left:1217.4px;top:721px;font-size:10px;color:#383838;font-weight:bold;-webkit-text-stroke:0.15px #fff;letter-spacing:-0.38px">PREVIOUS</div>
<div class="t" style="left:1367.7px;top:721px;font-size:10px;color:#383838;font-weight:bold;-webkit-text-stroke:0.15px #fff;letter-spacing:-0.3px">CHANGE</div>
<div class="t" style="left:485.6px;top:746px;font-size:13px;color:#333;font-weight:bold;letter-spacing:0.1px">Receivables</div>
<div class="t" style="left:778.4px;top:746px;font-size:13px;color:#2c4d80;font-weight:bold;letter-spacing:0.05px">This Period <span style="color:#2f3b50">vs.</span> Last Period</div>
<div class="t" style="left:1067.6px;top:746px;font-size:13px;color:#2c4d80;font-weight:bold;letter-spacing:0.08px">$47,785,531</div>
<div class="t" style="left:1217.4px;top:746px;font-size:13px;color:#2c4d80;font-weight:bold;letter-spacing:0.12px">$48,081,256</div>
<div class="t" style="left:1392.4px;top:745px;font-size:13px;color:#333;font-weight:bold;letter-spacing:-0.05px">0.6%</div>
<div class="t" style="left:485.6px;top:771px;font-size:13px;color:#333;font-weight:bold;letter-spacing:0.25px">New Customers</div>
<div class="t" style="left:778.4px;top:771px;font-size:13px;color:#2c4d80;font-weight:bold;letter-spacing:0.05px">This Period <span style="color:#2f3b50">vs.</span> Last Period</div>
<div class="t" style="left:1067.6px;top:771px;font-size:13px;color:#2c4d80;font-weight:bold;letter-spacing:0.08px">21</div>
<div class="t" style="left:1217.4px;top:771px;font-size:13px;color:#2c4d80;font-weight:bold;letter-spacing:0.12px">105</div>
<div class="t" style="left:1392.4px;top:770px;font-size:13px;color:#333;font-weight:bold;letter-spacing:-0.05px">80.0%</div>
<div class="t" style="left:485.6px;top:796px;font-size:13px;color:#333;font-weight:bold;letter-spacing:0.15px">New Business</div>
<div class="t" style="left:778.4px;top:796px;font-size:13px;color:#2c4d80;font-weight:bold;letter-spacing:0.05px">This Period <span style="color:#2f3b50">vs.</span> Last Period</div>
<div class="t" style="left:1067.6px;top:796px;font-size:13px;color:#2c4d80;font-weight:bold;letter-spacing:0.08px">$411,667</div>
<div class="t" style="left:1217.4px;top:796px;font-size:13px;color:#2c4d80;font-weight:bold;letter-spacing:0.12px">$1,433,879</div>
<div class="t" style="left:1392.4px;top:795px;font-size:13px;color:#333;font-weight:bold;letter-spacing:-0.05px">71.3%</div>
<div class="t" style="left:485.6px;top:821px;font-size:13px;color:#333;font-weight:bold;letter-spacing:0.1px">Sales</div>
<div class="t" style="left:778.4px;top:821px;font-size:13px;color:#2c4d80;font-weight:bold;letter-spacing:0.05px">This Period <span style="color:#2f3b50">vs.</span> Last Period</div>
<div class="t" style="left:1067.6px;top:821px;font-size:13px;color:#2c4d80;font-weight:bold;letter-spacing:0.08px">$884,138</div>
<div class="t" style="left:1217.4px;top:821px;font-size:13px;color:#2c4d80;font-weight:bold;letter-spacing:0.12px">$19,659,781</div>
<div class="t" style="left:1392.4px;top:820px;font-size:13px;color:#333;font-weight:bold;letter-spacing:-0.05px">95.5%</div>
<div class="t" style="left:485.6px;top:846px;font-size:13px;color:#333;font-weight:bold;letter-spacing:0.2px">Total Bank Balance</div>
<div class="t" style="left:778.4px;top:846px;font-size:13px;color:#2c4d80;font-weight:bold;letter-spacing:0.05px">This Period <span style="color:#2f3b50">vs.</span> Last Period</div>
<div class="t" style="left:1067.6px;top:846px;font-size:13px;color:#2c4d80;font-weight:bold;letter-spacing:0.08px">$14,963,235</div>
<div class="t" style="left:1217.4px;top:846px;font-size:13px;color:#2c4d80;font-weight:bold;letter-spacing:0.12px">$16,645,492</div>
<div class="t" style="left:1392.4px;top:845px;font-size:13px;color:#333;font-weight:bold;letter-spacing:-0.05px">10.1%</div>
<div class="t" style="left:485.6px;top:871px;font-size:13px;color:#333;font-weight:bold;letter-spacing:0.1px">Project Billing Forecast</div>
<div class="t" style="left:778.4px;top:871px;font-size:13px;color:#2c4d80;font-weight:bold;letter-spacing:0.28px">This Month <span style="color:#2f3b50">vs.</span> Last Month</div>
<div class="t" style="left:1067.6px;top:871px;font-size:13px;color:#2c4d80;font-weight:bold;letter-spacing:0.08px">$0</div>
<div class="t" style="left:1217.4px;top:871px;font-size:13px;color:#2c4d80;font-weight:bold;letter-spacing:0.12px">$0</div>
<div class="t" style="left:1392.4px;top:870px;font-size:13px;color:#333;font-weight:bold;letter-spacing:-0.05px">0.0%</div>
<svg style="left:1370px;top:740px" width="24" height="150" viewBox="1370 740 24 150" fill="none" stroke="#d8304d" stroke-width="1.800" stroke-linecap="round" stroke-linejoin="round">
<path d="M1381.700 744.8v12.400M1377 752.4l4.700 4.900 4.700-4.900"/>
<path d="M1381.700 769.8v12.400M1377 777.4l4.700 4.900 4.700-4.900"/>
<path d="M1381.700 794.8v12.400M1377 802.4l4.700 4.900 4.700-4.900"/>
<path d="M1381.700 819.8v12.400M1377 827.4l4.700 4.900 4.700-4.900"/>
<path d="M1381.700 844.8v12.400M1377 852.4l4.700 4.900 4.700-4.900"/>
</svg>
<svg style="left:446px;top:720px" width="14" height="10" viewBox="446 720 14 10"><path d="M448 722h10l-5 5.800z" fill="#5b6b8c"/></svg>
<!-- meters -->
<div class="dots" style="left:1685.5px;top:205px"><i style="left:0px;top:0px"></i><i style="left:6px;top:0px"></i><i style="left:12px;top:0px"></i><i style="left:0px;top:5px"></i><i style="left:6px;top:5px"></i><i style="left:12px;top:5px"></i></div>
<div class="t" style="left:1531.6px;top:219px;font-size:16px;color:#111;font-weight:bold;-webkit-text-stroke:0.3px #fff;letter-spacing:0.12px">KPI Meter</div>
<div class="sel" style="left:1531px;top:253px;width:323px;height:26px">&nbsp;</div>
<div class="t" style="left:1536px;top:260px;font-size:13px;color:#222;letter-spacing:0.14px">Receivables</div>
<svg style="left:1560px;top:300px" width="270" height="160" viewBox="1560 300 270 160">
<defs><linearGradient id="gm1" gradientUnits="userSpaceOnUse" x1="1575" y1="0" x2="1755" y2="0"><stop offset="0" stop-color="#f0ae38"/><stop offset="0.600" stop-color="#f2bb42"/><stop offset="1" stop-color="#f3cb50"/></linearGradient></defs>
<path d="M1745.86 347.49A109.85 109.85 0 0 1 1801.45 443.00" fill="none" stroke="#e4e9f2" stroke-width="14.70"/>
<path d="M1581.75 443.00A109.85 109.85 0 0 1 1745.86 347.49" fill="none" stroke="url(#gm1)" stroke-width="14.70"/>
<path d="M1740.20 358.82L1753.20 336.31" stroke="#e2a13c" stroke-width="1.500"/>
</svg>
<div class="t" style="left:1741.8px;top:317px;font-size:12px;color:#222;letter-spacing:0.08px">48.1M</div>
<div class="t" style="left:1635.8px;top:393px;font-size:32px;color:#111;letter-spacing:0.7px">$47.8M</div>
<div class="t" style="left:1658px;top:435px;font-size:10.4px;color:#444;letter-spacing:-0.33px">RECEIVABLES</div>
<div class="t" style="left:1578px;top:448px;font-size:11px;color:#222">0</div>
<div class="t" style="left:1786.8px;top:448px;font-size:11px;color:#222;letter-spacing:-0.1px">72.1M</div>
<div class="dots" style="left:1685.5px;top:519px"><i style="left:0px;top:0px"></i><i style="left:6px;top:0px"></i><i style="left:12px;top:0px"></i><i style="left:0px;top:5px"></i><i style="left:6px;top:5px"></i><i style="left:12px;top:5px"></i></div>
<div class="t" style="left:1531.6px;top:533px;font-size:16px;color:#111;font-weight:bold;-webkit-text-stroke:0.3px #fff;letter-spacing:0.12px">KPI Meter</div>
<div class="sel" style="left:1531px;top:567px;width:323px;height:26px">&nbsp;</div>
<div class="t" style="left:1536px;top:574px;font-size:13px;color:#222;letter-spacing:0.14px">Receivables</div>
<svg style="left:1560px;top:614px" width="270" height="160" viewBox="1560 614 270 160">
<defs><linearGradient id="gm2" gradientUnits="userSpaceOnUse" x1="1575" y1="0" x2="1755" y2="0"><stop offset="0" stop-color="#f0ae38"/><stop offset="0.600" stop-color="#f2bb42"/><stop offset="1" stop-color="#f3cb50"/></linearGradient></defs>
<path d="M1745.86 661.49A109.85 109.85 0 0 1 1801.45 757.00" fill="none" stroke="#e4e9f2" stroke-width="14.70"/>
<path d="M1581.75 757.00A109.85 109.85 0 0 1 1745.86 661.49" fill="none" stroke="url(#gm2)" stroke-width="14.70"/>
<path d="M1740.20 672.82L1753.20 650.31" stroke="#e2a13c" stroke-width="1.500"/>
</svg>
<div class="t" style="left:1741.8px;top:631px;font-size:12px;color:#222;letter-spacing:0.08px">48.1M</div>
<div class="t" style="left:1635.8px;top:707px;font-size:32px;color:#111;letter-spacing:0.7px">$47.8M</div>
<div class="t" style="left:1658px;top:749px;font-size:10.4px;color:#444;letter-spacing:-0.33px">RECEIVABLES</div>
<div class="t" style="left:1578px;top:762px;font-size:11px;color:#222">0</div>
<div class="t" style="left:1786.8px;top:762px;font-size:11px;color:#222;letter-spacing:-0.1px">72.1M</div>
<!-- trend -->
<div class="dots" style="left:1685.5px;top:833px"><i style="left:0px;top:0px"></i><i style="left:6px;top:0px"></i><i style="left:12px;top:0px"></i><i style="left:0px;top:5px"></i><i style="left:6px;top:5px"></i><i style="left:12px;top:5px"></i></div>
<div class="t" style="left:1532.2px;top:847px;font-size:16px;color:#111;font-weight:bold;-webkit-text-stroke:0.3px #fff;letter-spacing:-0.16px">Receivables By Period Trend</div>
<div class="sel" style="left:1531px;top:881px;width:323px;height:26px">&nbsp;</div>
<div class="t" style="left:1535.8px;top:888px;font-size:13px;color:#222;letter-spacing:0.3px">By Period</div>
<div class="t" style="left:1593.5px;top:903px;font-size:20px;color:#b9b9b9;letter-spacing:-0.28px">Activate Windows</div>
<!-- floaty -->
<svg style="left:1840px;top:405px" width="41" height="125" viewBox="1840 405 41 125">
<defs><filter id="fsh" x="-30%" y="-10%" width="160%" height="130%"><feGaussianBlur stdDeviation="2"/></filter></defs>
<rect x="1852" y="449" width="40" height="72" rx="18" fill="#4a5a70" opacity="0.350" filter="url(#fsh)"/>
<rect x="1851.200" y="446.700" width="40" height="71.600" rx="18" fill="#2a5a75"/>
<path d="M1869 415.700a10 10 0 0 1 10 10c0 5.200-5.600 9.600-10 15.400-4.400-5.800-10-10.200-10-15.400a10 10 0 0 1 10-10z" fill="#2b5d79"/>
<circle cx="1868.700" cy="464.800" r="10.800" fill="none" stroke="#e6eef3" stroke-width="1.400"/>
<g fill="#6f94a8"><rect x="1860.6" y="486.4" width="4.600" height="4.600" rx="1.300"/><rect x="1867.5" y="486.4" width="4.600" height="4.600" rx="1.300"/><rect x="1874.6" y="486.4" width="4.600" height="4.600" rx="1.300"/><rect x="1860.6" y="493.3" width="4.600" height="4.600" rx="1.300"/><rect x="1867.5" y="493.3" width="4.600" height="4.600" rx="1.300"/><rect x="1874.6" y="493.3" width="4.600" height="4.600" rx="1.300"/><rect x="1860.6" y="500.6" width="4.600" height="4.600" rx="1.300"/><rect x="1867.5" y="500.6" width="4.600" height="4.600" rx="1.300"/><rect x="1874.6" y="500.6" width="4.600" height="4.600" rx="1.300"/></g>
<text x="1869" y="431.600" text-anchor="middle" font-family="Liberation Sans, sans-serif" font-size="16.500" font-weight="bold" fill="#f2f6f8">?</text>
<text x="1868.600" y="470.200" text-anchor="middle" font-family="Liberation Serif, serif" font-size="16" font-weight="bold" font-style="italic" fill="#f2f6f8">i</text>
</svg>
</body>
</html>
